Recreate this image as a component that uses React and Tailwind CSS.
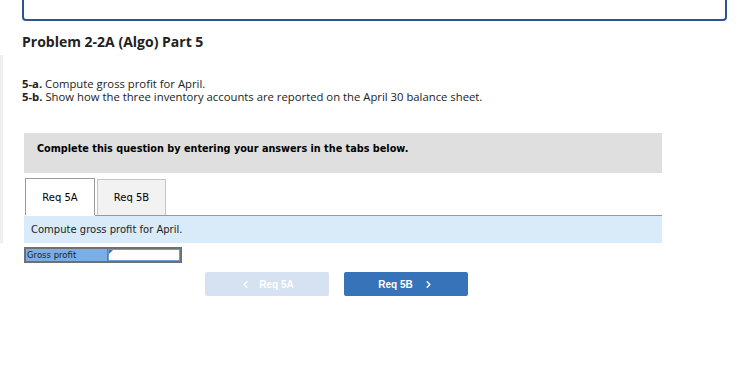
import { ChevronLeft, ChevronRight } from 'lucide-react'

const body = { fontFamily: '"Open Sans", "Liberation Sans", sans-serif' }
const verdana = { fontFamily: '"DejaVu Sans", Verdana, sans-serif' }

export default function App() {
  return (
    <div className="w-[752px] h-[388px] bg-white overflow-hidden" style={body}>
      {/* answer box from previous part */}
      <div className="ml-[22px] w-[705px] h-[31px] -mt-[10px] border-2 border-[#2b5591] rounded-[4px]" />

      <h2 className="ml-[22px] mt-[13px] text-[14px] leading-[16px] font-bold text-[#222]">
        Problem 2-2A (Algo) Part 5
      </h2>

      <div className="mt-[5px] border-l-[3px] border-[#eeeeee] pl-[19px] pt-[22px]">
        <p className="text-[11.3px] leading-[13px] text-[#222]">
          <b>5-a.</b> Compute gross profit for April.
        </p>
        <p className="text-[11.3px] leading-[13px] text-[#222]">
          <b>5-b.</b> Show how the three inventory accounts are reported on the April 30 balance sheet.
        </p>

        <div className="ml-[2px] w-[638px] mt-[30px]" style={verdana}>
          <div className="h-[40px] bg-[#dfdfdf] pl-[13px] pt-[9px] text-[9.7px] leading-[14px] font-bold text-black">
            Complete this question by entering your answers in the tabs below.
          </div>

          <div className="mt-[5px] flex items-end">
            <div className="ml-[1px] w-[70px] h-[37px] border border-b-0 border-[#999] bg-white flex items-center justify-center text-[10px] text-black">
              Req 5A
            </div>
            <div className="ml-[2px] w-[69px] h-[36px] border border-b-0 border-[#c4c4c4] bg-[#f2f2f2] flex items-center justify-center text-[10px] text-black">
              Req 5B
            </div>
            <div className="flex-1" />
          </div>
          <div className="flex">
            <div className="w-[71px]" />
            <div className="flex-1 h-px bg-[#999]" />
          </div>

          <div className="h-[27px] bg-[#d9ebf9] pl-[7px] flex items-center text-[10px] text-[#222]">
            Compute gross profit for April.
          </div>
        </div>
      </div>

      <div className="ml-[24px] mt-[4px] flex w-[158px] h-[16px] border-2 border-[#707070]" style={verdana}>
        <div className="w-[82px] bg-[#7aaee5] border-r border-[#5a7ea8] pl-[1px] flex items-center text-[8.5px] text-[#222]">
          Gross profit
        </div>
        <div className="relative flex-1 bg-white border border-[#6c9cd4]">
          <div className="absolute left-0 top-0 w-0 h-0 border-t-[4px] border-r-[4px] border-t-[#3a72b8] border-r-transparent" />
        </div>
      </div>

      <div className="ml-[205px] mt-[9px] flex gap-[15px]" style={{ fontFamily: '"Liberation Sans", Arial, sans-serif' }}>
        <div className="w-[124px] h-[24px] rounded-[2px] bg-[#d6e2f1] flex items-center justify-center gap-[8px] text-white text-[10px] font-bold">
          <ChevronLeft size={11} strokeWidth={3} />
          <span>Req 5A</span>
        </div>
        <div className="w-[124px] h-[24px] rounded-[2px] bg-[#3673b8] flex items-center justify-center gap-[10px] text-white text-[10px] font-bold">
          <span>Req 5B</span>
          <ChevronRight size={11} strokeWidth={3} />
        </div>
      </div>
    </div>
  )
}
